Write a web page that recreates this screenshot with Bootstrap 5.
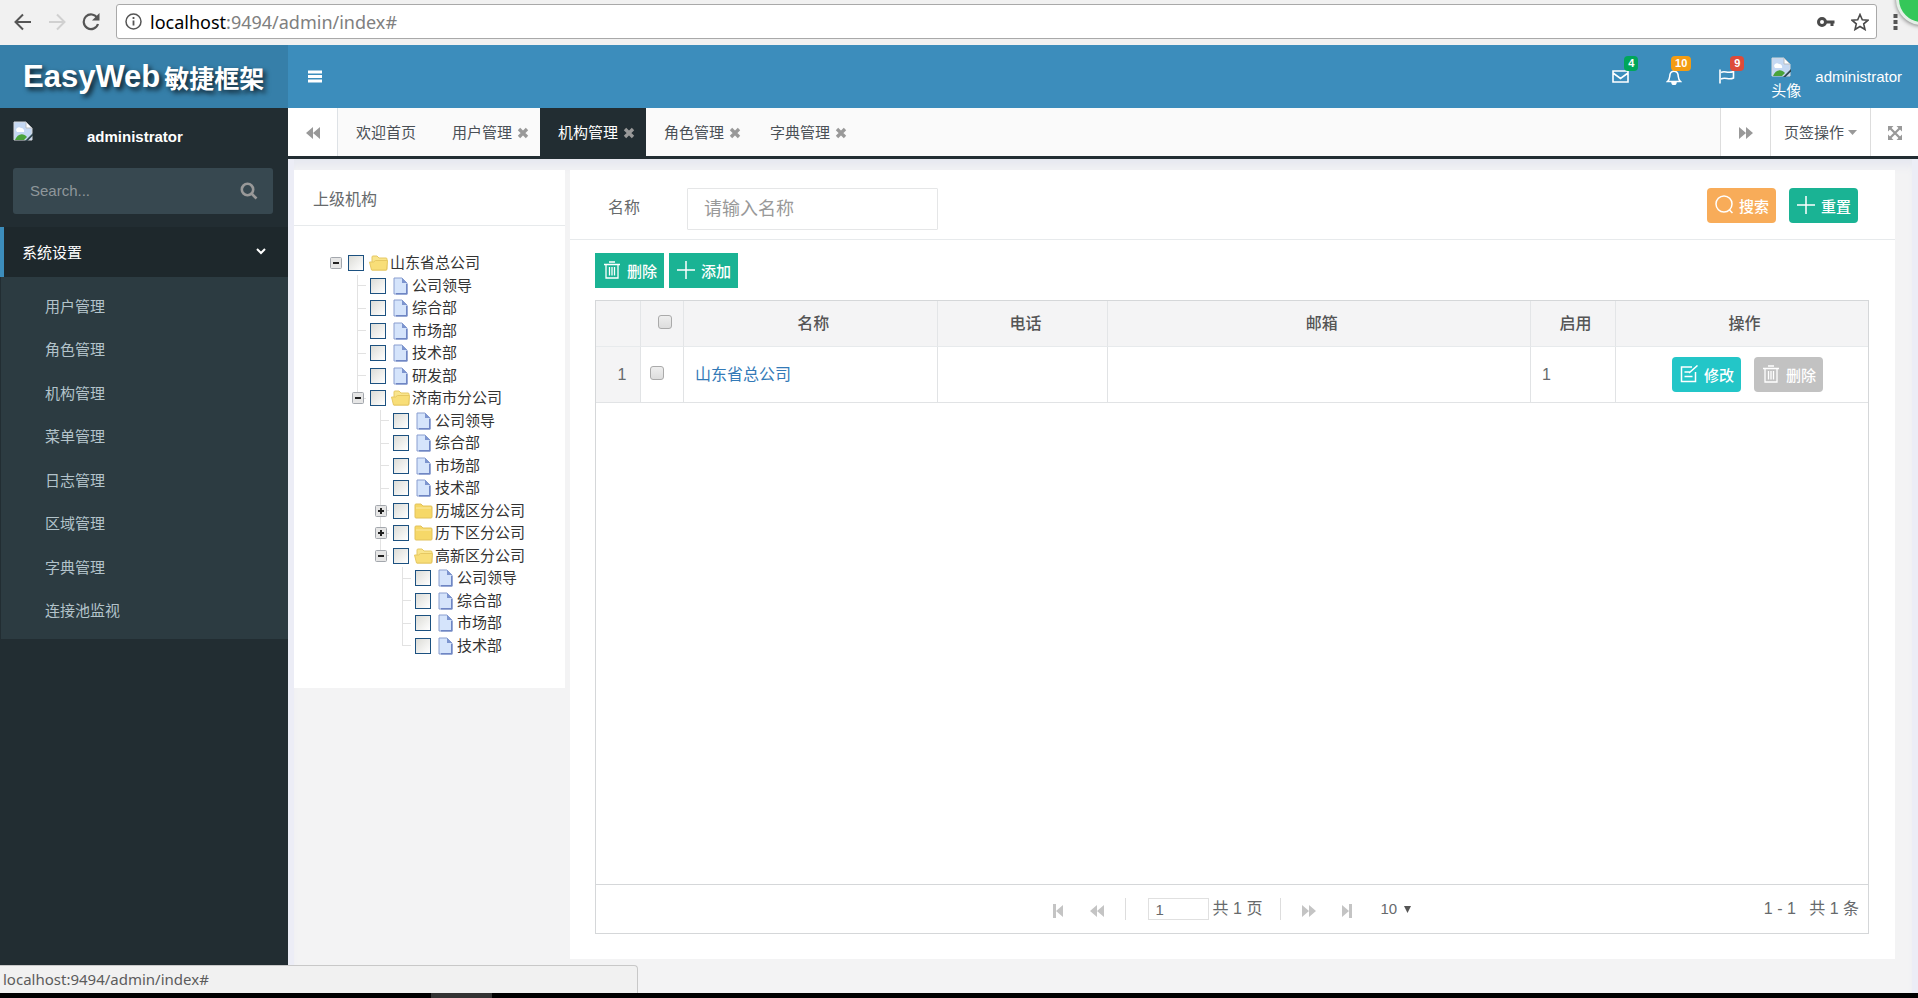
<!DOCTYPE html>
<html lang="zh-CN">
<head>
<meta charset="utf-8">
<meta name="viewport" content="width=device-width, initial-scale=1">
<title>EasyWeb敏捷框架</title>
<link href="https://cdn.jsdelivr.net/npm/bootstrap@5.3.0/dist/css/bootstrap.min.css" rel="stylesheet">
<style>
  body { font-family: "Liberation Sans", "Noto Sans CJK SC", sans-serif; font-size: 15px; line-height: 20px; color: #676a6c; background: #ecedf6; overflow: hidden; }
  svg { display: block; flex: none; }
  button { font-family: inherit; }
  a { text-decoration: none; }

  /* browser chrome */
  .chrome-bar { height: 45px; background: #f1f1f1; padding: 0 16px 2px 14px; color: #5a5a5a; }
  .chrome-bar button, .plain-btn { border: 0; background: none; padding: 0; color: inherit; }
  .address { height: 35px; border: 1px solid #a9a9a9; border-radius: 3px; background: #fff; padding: 0 7px 0 8px; }
  .url-text { font: 18px/24px "Noto Sans", sans-serif; color: #808080; }
  .url-text b { font-weight: 400; color: #000; }
  .float-ball { position: absolute; right: -30px; top: -27px; width: 52px; height: 52px; border-radius: 50%; background: #35c759; border: 3px solid #e4efe6; box-shadow: 0 1px 4px rgba(0,0,0,.5); }
  .status-tip { position: absolute; left: 0; bottom: 0; width: 638px; height: 28px; background: #f1f1f1; border: 1px solid #c8c8c8; border-left: 0; border-bottom: 0; border-top-right-radius: 4px; padding: 0 3px; font: 15px/26px "Noto Sans", sans-serif; color: #5c5c5c; }
  .taskbar { height: 5px; background: #000; }
  .taskbar i { display: block; width: 61px; height: 5px; margin-left: 431px; background: #333; }

  /* header */
  .top-head { height: 63px; background: #3c8dbc; color: #fff; }
  .brand { width: 288px; background: #367fa9; color: #fff; font-weight: 700; font-size: 31px; padding: 1px 0 0 23px; text-shadow: 3px 3px 5px rgba(0,0,0,.75); display: flex; align-items: center; gap: 4px; }
  .brand span { font-size: 25px; padding-top: 4px; }
  .notice { position: relative; width: 53px; height: 63px; color: #fff; display: flex; align-items: center; justify-content: center; }
  .notice .count { position: absolute; top: 11px; right: 9px; min-width: 13px; padding: 0 4px; font-size: 11px; line-height: 15px; font-weight: 700; border-radius: 4px; text-align: center; }
  .notice.narrow .count { padding: 0 3px; }
  .head-user { color: #fff; }
  .avatar-alt { display: flex; flex-direction: column; gap: 4px; padding-top: 5px; margin: 0 14px 0 2px; }

  /* sidebar */
  .side { width: 288px; background: #222d32; color: #fff; }
  .user-panel { height: 60px; padding: 13px 13px 0; }
  .user-panel .gap-box { width: 54px; }
  .user-panel b { padding-top: 6px; }
  .side-search { height: 46px; margin: 0 15px 13px 13px; background: #374850; border-radius: 3px; padding: 0 15px 0 17px; color: #999; }
  .side-search input { width: 100px; background: none; border: 0; outline: 0; font-size: 15px; color: #999; padding: 0; }
  .side-search input::placeholder { color: #8f979b; opacity: 1; }
  .menu-head { height: 50px; background: #1e282c; border-left: 4px solid #3c8dbc; color: #fff; padding: 2px 22px 0 18px; }
  .sub-menu { background: #2c3b41; margin-left: 1px; padding: 8px 0 6px; height: 362px; }
  .sub-menu li { flex: 1; display: flex; align-items: center; }
  .sub-menu a { color: #b3c3ca; padding-left: 44px; }

  /* tab strip */
  .tab-strip { height: 51px; background: #fafafa; border-bottom: 3px solid #222d32; color: #4a5056; }
  .strip-btn { background: #fff; border: 0; color: #999; display: flex; align-items: center; justify-content: center; padding-top: 2px; }
  .strip-btn + .strip-btn, .strip-btn.lead-line { border-left: 1px solid #ddd; }
  .page-tab { color: #4a5056; padding: 2px 11px 0 18px; display: flex; align-items: center; gap: 5px; }
  .page-tab.home { padding-right: 18px; }
  .page-tab.current { background: #222d32; color: #fff; }
  .page-tab button { color: #999; }

  /* frame */
  .frame { background: #f3f3f4; margin: 0 6px; padding: 11px 17px 34px 0; gap: 5px; box-shadow: inset 0 11px 8px -4px #e6e8f0; }
  .tree-panel { width: 271px; height: 518px; background: #fff; }
  .panel-title { height: 56px; border-bottom: 1px solid #e7eaec; padding: 20px 19px 0; font-size: 16px; }
  .tree { height: 405px; margin: 26px 0 0 30px; display: grid; grid-auto-rows: 1fr; color: #333; line-height: 20px; }
  .tree li { display: flex; align-items: center; min-height: 0; }
  .lv1 { padding-left: 22px; } .lv2 { padding-left: 45px; } .lv3 { padding-left: 67px; }
  .slot { width: 23px; align-self: stretch; display: flex; align-items: center; justify-content: center; margin-right: 1px; flex: none; }
  .branch { background: linear-gradient(#e2e2e2,#e2e2e2) 11px 0/1px 100% no-repeat, linear-gradient(#e2e2e2,#e2e2e2) 11px 50%/9px 1px no-repeat; }
  .branch.tail { background-size: 1px 50%, 9px 1px; }
  .tree input { appearance: none; flex: none; width: 16px; height: 16px; margin: 0 5px 0 0; border: 1px solid #1c5180; background: linear-gradient(135deg,#dcdcd7,#fff); }
  .node-icon { width: 21px; flex: none; }
  .node-icon.leaf { padding-left: 2px; }

  /* work area */
  .work { background: #fff; min-width: 0; }
  .query { height: 70px; border-bottom: 1px solid #e7eaec; padding: 18px 37px 0 38px; }
  .query label { width: 79px; font-size: 16px; line-height: 40px; }
  .query input { width: 251px; height: 42px; border: 1px solid #e5e6e7; border-radius: 1px; padding: 0 16px; font-size: 18px; color: #676a6c; }
  .query input::placeholder { color: #999; opacity: 1; }
  .act { width: 69px; height: 35px; border: 0; border-radius: 4px; color: #fff; font-size: 15px; font-weight: 500; display: inline-flex; align-items: center; justify-content: space-between; padding: 0 7px 0 8px; }
  .act svg { margin-bottom: 2px; }
  .act span { padding-top: 3px; }
  .act.square { border-radius: 0; }
  .c-green { background: #1ab394; } .c-orange { background: #f8ac59; } .c-teal { background: #23c6c8; } .c-gray { background: #c2c2c2; }
  .grid-box { border: 1px solid #d5d7d9; margin: 12px 26px 25px 25px; color: #676a6c; font-size: 16px; }
  .grid-tbl { width: 100%; table-layout: fixed; border-collapse: separate; border-spacing: 0; }
  .grid-tbl th { height: 46px; background: #f4f4f5; text-align: center; font-weight: 500; color: #555; border-right: 1px solid #e3e5e7; border-bottom: 1px solid #e7eaec; padding: 0 0 0 5px; }
  .grid-tbl td { height: 56px; border-right: 1px solid #e1e3e5; border-bottom: 1px solid #e1e3e5; padding: 0 11px; }
  .grid-tbl th:last-child, .grid-tbl td:last-child { border-right: 0; }
  .grid-tbl td:last-child { padding: 0 0 0 11px; }
  .grid-tbl td.rn { background: #f4f4f5; text-align: center; padding: 0 0 0 8px; }
  .grid-tbl td.ck { padding: 0 9px; }
  .grid-tbl input { appearance: none; display: block; width: 14px; height: 14px; border: 1px solid #aaa; border-radius: 3px; background: linear-gradient(#eee,#ddd); margin-bottom: 3px; }
  .grid-tbl a { color: #337ab7; }
  .pager { height: 49px; border-top: 1px solid #d5d7d9; display: grid; grid-template-columns: 1fr auto 1fr; align-items: center; color: #c4c4c4; }
  .pager .txt { color: #676a6c; }
  .pager button { padding-top: 3px; }
  .pager input { width: 61px; height: 22px; border: 1px solid #e0e0e0; padding: 0 7px; color: #676a6c; font-size: 15px; margin: 0 4px 0 22px; }
  .pager .sep { width: 1px; height: 22px; background: #ddd; }
  .pager select { appearance: none; border: 0; background: none; font-size: 15px; color: #676a6c; padding: 0; width: 17px; }
</style>
</head>
<body class="vh-100 d-flex flex-column">

<svg width="0" height="0" class="position-absolute" aria-hidden="true">
  <defs>
    <symbol id="i-broken" viewBox="0 0 20 20"><path d="M1 1h12l6 6v12H1z" fill="#c4d8f3" stroke="#d5d8dc"/><path d="M13 1v6h6z" fill="#fff" stroke="#b9bcc0"/><path d="M3 9a3 3 0 0 1 5-2 3 3 0 0 1 3 4H4z" fill="#fff"/><path d="M2 19c2-6 8-8 12-3l-3 3z" fill="#4aa33b"/><path d="M12 20l8-8v2.500L14.500 20z" fill="#31464f"/></symbol>
    <symbol id="i-x" viewBox="0 0 12 12"><path d="M2 2l8 8M10 2l-8 8" stroke="currentColor" stroke-width="3.4"/></symbol>
    <symbol id="i-dbl" viewBox="0 0 14 14"><path d="M0 1l7 6-7 6zM7 1l7 6-7 6z" fill="currentColor"/></symbol>
    <symbol id="i-end" viewBox="0 0 10 14"><path d="M0 1l7 6-7 6zM7 0h3v14H7z" fill="currentColor"/></symbol>
    <symbol id="i-page" viewBox="0 0 15 18"><path d="M1 1h8l5 5v11H1z" fill="#d5e4fb" stroke="#8a9ed0"/><path d="M13 7h1.500v10.500H3v-1.500h10z" fill="#6f86c4"/><path d="M9 1v5h5z" fill="#7d95cf"/></symbol>
    <symbol id="i-folder" viewBox="0 0 19 16"><path d="M1 2q0-1 1-1h5l2 2h8q1 0 1 1v10q0 1-1 1H2q-1 0-1-1z" fill="#f6d868" stroke="#e2c25a"/><path d="M2 5h15" stroke="#fbeaa5"/></symbol>
    <symbol id="i-open" viewBox="0 0 19 16"><path d="M3 2q0-1 1-1h4l2 2h7q1 0 1 1v10q0 1-1 1H3z" fill="#f9e58c" stroke="#e6c862"/><path d="M.5 7h4l2-1.500h12L17.500 15H2.500z" fill="#f8de78" stroke="#e6c862"/></symbol>
    <symbol id="i-minus" viewBox="0 0 12 12"><rect x=".5" y=".5" width="11" height="11" rx="1" fill="#e6e6e6" stroke="#a3a7ad"/><path d="M3 6h6" stroke="#222" stroke-width="2"/></symbol>
    <symbol id="i-plus" viewBox="0 0 12 12"><rect x=".5" y=".5" width="11" height="11" rx="1" fill="#e6e6e6" stroke="#a3a7ad"/><path d="M3 6h6M6 3v6" stroke="#222" stroke-width="2"/></symbol>
    <symbol id="i-trash" viewBox="0 0 18 18"><path d="M1 3.500h16M6 1h6M3 4v13h12V4M6.500 6v8.500M9 6v8.500M11.500 6v8.500" fill="none" stroke="#fff" stroke-width="1.300"/></symbol>
    <symbol id="i-add" viewBox="0 0 18 18"><path d="M9 0v18M0 9h18" stroke="#fff" stroke-width="1.500"/></symbol>
  </defs>
</svg>

<div class="chrome-bar d-flex align-items-center position-relative overflow-hidden">
  <button aria-label="后退"><svg width="18" height="18" viewBox="0 0 18 18" fill="none" stroke="#555" stroke-width="2"><path d="M17 9H2M9 1.500L1.500 9 9 16.500"/></svg></button>
  <button aria-label="前进" class="ms-3"><svg width="18" height="18" viewBox="0 0 18 18" fill="none" stroke="#d0d0d0" stroke-width="2"><path d="M1 9h15M9 1.500L16.500 9 9 16.500"/></svg></button>
  <button aria-label="刷新" class="ms-3 me-2"><svg width="18" height="18" viewBox="0 0 18 18"><path d="M15.300 5A7.300 7.300 0 1 0 16 11" fill="none" stroke="#555" stroke-width="2.200"/><path d="M17.500 0v7.500H10z" fill="#555"/></svg></button>
  <div class="address ms-2 flex-grow-1 d-flex align-items-center">
    <svg width="17" height="17" viewBox="0 0 17 17" class="me-2"><circle cx="8.500" cy="8.500" r="7.500" fill="none" stroke="#555" stroke-width="1.500"/><path d="M8.500 7.500v5M8.500 4v2" stroke="#555" stroke-width="1.800"/></svg>
    <div class="url-text flex-grow-1"><b>localhost</b>:9494/admin/index#</div>
    <svg width="18" height="12" viewBox="0 0 18 12" class="me-3"><circle cx="5" cy="6" r="3.500" fill="none" stroke="#4a4a4a" stroke-width="3"/><path d="M8 6h9.500M15 6v4" stroke="#4a4a4a" stroke-width="3"/></svg>
    <svg width="18" height="18" viewBox="0 0 18 18"><path d="M9 1.500l2.300 5.200 5.700.5-4.300 3.700 1.300 5.600L9 13.500l-5 3 1.300-5.600L1 7.200l5.700-.5z" fill="none" stroke="#4a4a4a" stroke-width="1.600"/></svg>
  </div>
  <svg width="5" height="18" viewBox="0 0 5 18" class="ms-3 me-1"><path d="M.5 1h4v4h-4zM.5 7h4v4h-4zM.5 13h4v4h-4z" fill="#555"/></svg>
  <div class="float-ball"></div>
</div>

<header class="top-head d-flex align-items-stretch">
  <a href="#" class="brand text-nowrap">EasyWeb<span>敏捷框架</span></a>
  <button class="plain-btn ms-3 ps-1" aria-label="切换菜单"><svg width="14" height="16" viewBox="0 0 14 16"><path d="M0 3h14M0 7.500h14M0 12h14" stroke="#fff" stroke-width="3"/></svg></button>
  <div class="ms-auto d-flex align-items-center">
    <a href="#" class="notice" aria-label="邮件"><svg width="17" height="13" viewBox="0 0 17 13" fill="none" stroke="#fff" stroke-width="1.600"><path d="M1 1h15v11H1zM1 3l7.500 5.500L16 3"/></svg><span class="count" style="background:#00a65a">4</span></a>
    <a href="#" class="notice" aria-label="通知"><svg width="16" height="16" viewBox="0 0 16 16" fill="none" stroke="#fff" stroke-width="1.500"><path d="M1.500 12.500C4 10.500 3.500 8 4 5.500 4.500 3 6 2.200 8 2.200s3.500.8 4 3.300c.5 2.500 0 5 2.500 7zM8 .3v2"/><path d="M6 13.500a2 2 0 0 0 4 0z" fill="#fff"/></svg><span class="count" style="background:#f39c12">10</span></a>
    <a href="#" class="notice" aria-label="任务"><svg width="17" height="15" viewBox="0 0 17 15" fill="none" stroke="#fff" stroke-width="1.600"><path d="M2 .5v14"/><path d="M3 3.500c4-2.500 6 1.500 12.500-1v6.500c-5 2.500-8-1.500-12.500 1"/></svg><span class="count" style="background:#dd4b39">9</span></a>
    <a href="#" class="head-user d-flex align-items-center ms-3 me-3">
      <span class="avatar-alt"><svg width="20" height="20"><use href="#i-broken"/></svg><span>头像</span></span>
      <span>administrator</span>
    </a>
  </div>
</header>

<div class="d-flex flex-grow-1 position-relative" style="min-height:0">
  <aside class="side flex-shrink-0">
    <div class="user-panel d-flex">
      <svg width="20" height="20"><use href="#i-broken"/></svg>
      <span class="gap-box"></span>
      <b>administrator</b>
    </div>
    <form class="side-search d-flex align-items-center justify-content-between">
      <input type="text" placeholder="Search..." aria-label="Search">
      <button type="button" class="plain-btn" aria-label="查找"><svg width="18" height="18" viewBox="0 0 18 18" fill="none" stroke="#999" stroke-width="2.600"><circle cx="7.500" cy="7.500" r="5.700"/><path d="M11.500 11.500l5 5"/></svg></button>
    </form>
    <a href="#" class="menu-head d-flex align-items-center justify-content-between">系统设置<svg width="10" height="7" viewBox="0 0 10 7" fill="none" stroke="#fff" stroke-width="2" class="mb-1"><path d="M1 1l4 4 4-4"/></svg></a>
    <ul class="sub-menu list-unstyled mb-0 d-flex flex-column">
      <li><a href="#">用户管理</a></li><li><a href="#">角色管理</a></li><li><a href="#">机构管理</a></li><li><a href="#">菜单管理</a></li>
      <li><a href="#">日志管理</a></li><li><a href="#">区域管理</a></li><li><a href="#">字典管理</a></li><li><a href="#">连接池监视</a></li>
    </ul>
  </aside>

  <div class="flex-grow-1 d-flex flex-column" style="min-width:0">
    <nav class="tab-strip d-flex align-items-stretch">
      <button class="strip-btn border-end" style="width:50px" aria-label="向左"><svg width="14" height="14" transform="rotate(180)"><use href="#i-dbl"/></svg></button>
      <a href="#" class="page-tab home">欢迎首页</a>
      <span class="page-tab"><a href="#" class="text-reset">用户管理</a><button class="plain-btn" aria-label="关闭"><svg width="12" height="12"><use href="#i-x"/></svg></button></span>
      <span class="page-tab current"><a href="#" class="text-reset">机构管理</a><button class="plain-btn" aria-label="关闭"><svg width="12" height="12"><use href="#i-x"/></svg></button></span>
      <span class="page-tab"><a href="#" class="text-reset">角色管理</a><button class="plain-btn" aria-label="关闭"><svg width="12" height="12"><use href="#i-x"/></svg></button></span>
      <span class="page-tab"><a href="#" class="text-reset">字典管理</a><button class="plain-btn" aria-label="关闭"><svg width="12" height="12"><use href="#i-x"/></svg></button></span>
      <button class="strip-btn lead-line ms-auto" style="width:50px" aria-label="向右"><svg width="14" height="14"><use href="#i-dbl"/></svg></button>
      <button class="strip-btn" style="width:100px"><span style="color:#4a5056">页签操作</span><svg width="9" height="5" viewBox="0 0 9 5" class="ms-1"><path d="M0 0h9L4.500 5z" fill="#999"/></svg></button>
      <button class="strip-btn" style="width:48px" aria-label="全屏"><svg width="14" height="14" viewBox="0 0 14 14"><path d="M0 0h5.500L0 5.500zM14 0v5.500L8.500 0zM0 14V8.500L5.500 14zM14 14H8.500L14 8.500z" fill="#999"/><path d="M2 2l10 10M12 2L2 12" stroke="#999" stroke-width="2.200"/></svg></button>
    </nav>

    <main class="frame flex-grow-1 d-flex">
      <section class="tree-panel flex-shrink-0">
        <div class="panel-title">上级机构</div>
        <ul class="tree list-unstyled mb-0" id="tree"></ul>
      </section>

      <section class="work flex-grow-1 d-flex flex-column">
        <form class="query d-flex">
          <label for="q">名称</label>
          <input id="q" type="text" placeholder="请输入名称">
          <div class="ms-auto d-flex" style="gap:13px">
            <button type="button" class="act c-orange"><svg width="19" height="19" viewBox="0 0 19 19" fill="none" stroke="#fff" stroke-width="1.500"><circle cx="9" cy="9" r="8"/><path d="M14 14.500l3.500 3.500"/></svg><span>搜索</span></button>
            <button type="button" class="act c-green"><svg width="18" height="18"><use href="#i-add"/></svg><span>重置</span></button>
          </div>
        </form>
        <div class="d-flex" style="gap:5px;padding:13px 25px 0">
          <button class="act square c-green"><svg width="18" height="18"><use href="#i-trash"/></svg><span>删除</span></button>
          <button class="act square c-green"><svg width="18" height="18"><use href="#i-add"/></svg><span>添加</span></button>
        </div>
        <div class="grid-box flex-grow-1 d-flex flex-column">
          <table class="grid-tbl">
            <colgroup><col style="width:45px"><col style="width:43px"><col style="width:20%"><col style="width:170px"><col><col style="width:85px"><col style="width:252px"></colgroup>
            <thead><tr><th></th><th><input type="checkbox" class="mx-auto" aria-label="全选"></th><th>名称</th><th>电话</th><th>邮箱</th><th>启用</th><th>操作</th></tr></thead>
            <tbody><tr><td class="rn">1</td><td class="ck"><input type="checkbox" aria-label="选择"></td><td><a href="#">山东省总公司</a></td><td></td><td></td><td>1</td>
              <td><div class="d-flex justify-content-center" style="gap:13px">
                <button class="act c-teal"><svg width="18" height="18" viewBox="0 0 18 18" fill="none" stroke="#fff" stroke-width="1.500"><path d="M12 2H1.500v14.500h14V7M4.500 7h6M4.500 11.500h8M9 8l8.500-7.500"/></svg><span>修改</span></button>
                <button class="act c-gray"><svg width="18" height="18"><use href="#i-trash"/></svg><span>删除</span></button>
              </div></td></tr></tbody>
          </table>
          <div class="pager mt-auto">
            <span></span>
            <div class="d-flex align-items-center">
              <button class="plain-btn" aria-label="首页"><svg width="10" height="14" transform="rotate(180)"><use href="#i-end"/></svg></button>
              <button class="plain-btn" style="margin:0 21px 0 27px" aria-label="上一页"><svg width="14" height="14" transform="rotate(180)"><use href="#i-dbl"/></svg></button>
              <span class="sep"></span>
              <input type="text" value="1" aria-label="页码"><span class="txt">共 1 页</span>
              <span class="sep" style="margin:0 21px 0 18px"></span>
              <button class="plain-btn" aria-label="下一页"><svg width="14" height="14"><use href="#i-dbl"/></svg></button>
              <button class="plain-btn" style="margin:0 28px 0 26px" aria-label="末页"><svg width="10" height="14"><use href="#i-end"/></svg></button>
              <select aria-label="每页条数"><option>10</option></select>
              <svg width="7" height="7" viewBox="0 0 8 8" style="margin-left:7px"><path d="M0 0h8L4 8z" fill="#555"/></svg>
            </div>
            <span class="txt text-end" style="padding-right:9px;white-space:pre">1 - 1   共 1 条</span>
          </div>
        </div>
      </section>
    </main>
  </div>
  <div class="status-tip">localhost:9494/admin/index#</div>
</div>
<div class="taskbar"><i></i></div>

<script>
  // [level, kind, label]; kind: o = open folder, f = closed folder, p = leaf, a trailing "." marks the last sibling
  const nodes = [
    [0,'o.','山东省总公司'],[1,'p','公司领导'],[1,'p','综合部'],[1,'p','市场部'],[1,'p','技术部'],[1,'p','研发部'],
    [1,'o.','济南市分公司'],[2,'p','公司领导'],[2,'p','综合部'],[2,'p','市场部'],[2,'p','技术部'],
    [2,'f','历城区分公司'],[2,'f','历下区分公司'],[2,'o.','高新区分公司'],
    [3,'p','公司领导'],[3,'p','综合部'],[3,'p','市场部'],[3,'p.','技术部']
  ];
  const icon = (id, w, h) => `<svg width="${w}" height="${h}"><use href="#${id}"/></svg>`;
  document.getElementById('tree').innerHTML = nodes.map(([lv, kind, label], i) => {
    const k = kind[0], tail = kind.length > 1 ? ' tail' : '';
    const toggle = k === 'p' ? '' : icon(k === 'o' ? 'i-minus' : 'i-plus', 12, 12);
    const pic = k === 'p' ? icon('i-page', 15, 18) : icon(k === 'o' ? 'i-open' : 'i-folder', 19, 16);
    return `<li class="lv${lv}"><span class="slot${lv ? ' branch' + tail : ''}">${toggle}</span>` +
      `<input type="checkbox" id="n${i}"><span class="node-icon${k === 'p' ? ' leaf' : ''}">${pic}</span><label for="n${i}">${label}</label></li>`;
  }).join('');
</script>
<script src="https://cdn.jsdelivr.net/npm/bootstrap@5.3.0/dist/js/bootstrap.bundle.min.js"></script>
</body>
</html>
